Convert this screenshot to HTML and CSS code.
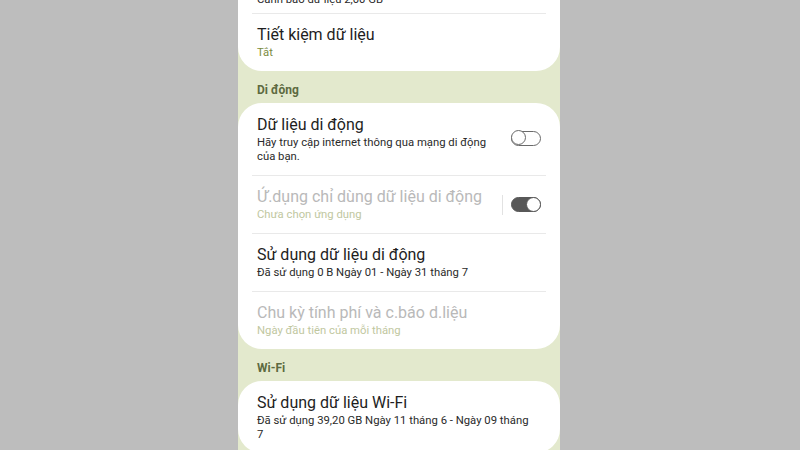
FILE: index.html
```html
<!DOCTYPE html>
<html lang="vi">
<head>
  <meta charset="UTF-8" />
  <meta name="viewport" content="width=device-width, initial-scale=1.0"/>
  <title>Sử dụng dữ liệu</title>
  <link rel="stylesheet" href="styles.css">
</head>
<body>
  <div class="screen">
    <div class="card card-first">
      <div class="row row-clipped">
        <div class="row-text">
          <div class="row-title">Ngưỡng cảnh báo dữ liệu</div>
          <div class="row-sub">Cảnh báo dữ liệu 2,00 GB</div>
        </div>
      </div>
      <div class="row">
        <div class="row-text">
          <div class="row-title">Tiết kiệm dữ liệu</div>
          <div class="row-sub accent">Tắt</div>
        </div>
      </div>
    </div>

    <div class="section-title">Di động</div>
    <div class="card">
      <div class="row">
        <div class="row-text">
          <div class="row-title">Dữ liệu di động</div>
          <div class="row-sub">Hãy truy cập internet thông qua mạng di động của bạn.</div>
        </div>
        <div class="switch"><span class="knob"></span></div>
      </div>
      <div class="row disabled">
        <div class="row-text">
          <div class="row-title">Ứ.dụng chỉ dùng dữ liệu di động</div>
          <div class="row-sub">Chưa chọn ứng dụng</div>
        </div>
        <div class="vsep"></div>
        <div class="switch on"><span class="knob"></span></div>
      </div>
      <div class="row">
        <div class="row-text">
          <div class="row-title">Sử dụng dữ liệu di động</div>
          <div class="row-sub">Đã sử dụng 0 B Ngày 01 - Ngày 31 tháng 7</div>
        </div>
      </div>
      <div class="row disabled">
        <div class="row-text">
          <div class="row-title">Chu kỳ tính phí và c.báo d.liệu</div>
          <div class="row-sub">Ngày đầu tiên của mỗi tháng</div>
        </div>
      </div>
    </div>

    <div class="section-title">Wi-Fi</div>
    <div class="card">
      <div class="row">
        <div class="row-text">
          <div class="row-title">Sử dụng dữ liệu Wi-Fi</div>
          <div class="row-sub">Đã sử dụng 39,20 GB Ngày 11 tháng 6 - Ngày 09 tháng 7</div>
        </div>
      </div>
    </div>
  </div>
</body>
</html>
```

FILE: styles.css
```css
* { margin: 0; padding: 0; box-sizing: border-box; }
body {
  font-family: Roboto, "Noto Sans", sans-serif;
  background: #bdbdbd;
  height: 450px; overflow: hidden;
}
.screen {
  width: 322px; height: 450px; margin: 0 auto; overflow: hidden;
  background: #e3e9cd;
  position: relative; left: -1px;
}
.card { background: #fff; border-radius: 24px; }
.card-first { margin-top: -40px; }
.row {
  display: flex; align-items: center;
  padding: 12px 19px 11px 19px;
  position: relative;
}
.row + .row::before {
  content: ""; position: absolute; top: 0; left: 14px; right: 14px;
  height: 1px; background: #e9e9e9;
}
.row-clipped { padding-bottom: 6px; }
.row-text { flex: 1; min-width: 0; padding-right: 10px; }
.row-title { font-size: 16px; line-height: 20px; color: #1e1e1e; }
.row-sub { font-size: 11.3px; line-height: 14px; color: #2a2a2a; margin-top: 1px; }
.row-sub.accent { color: #7b8b3e; }
.disabled .row-title { color: #b9b9b9; }
.disabled .row-sub { color: #bfc79f; }
.section-title {
  font-size: 12px; font-weight: 700; color: #5d6a40;
  padding: 11px 19px 6px 19px; line-height: 16px;
}
.section-title + .card { margin-top: -1px; }
.switch {
  width: 30px; height: 15px; border-radius: 8px;
  border: 1.3px solid #6a6a6a; position: relative; flex-shrink: 0;
  margin-left: 4px; margin-top: -3px;
}
.switch .knob {
  position: absolute; top: -1.3px; left: -1.3px;
  width: 15px; height: 15px; border-radius: 50%;
  border: 1.3px solid #6a6a6a; background: #fff;
}
.switch.on { background: #585858; border-color: #585858; margin-top: 0; margin-left: 8px; }
.switch.on .knob { left: auto; right: -1.3px; border-color: #585858; }
.vsep { width: 1px; height: 20px; background: #e2e2e2; }
```
